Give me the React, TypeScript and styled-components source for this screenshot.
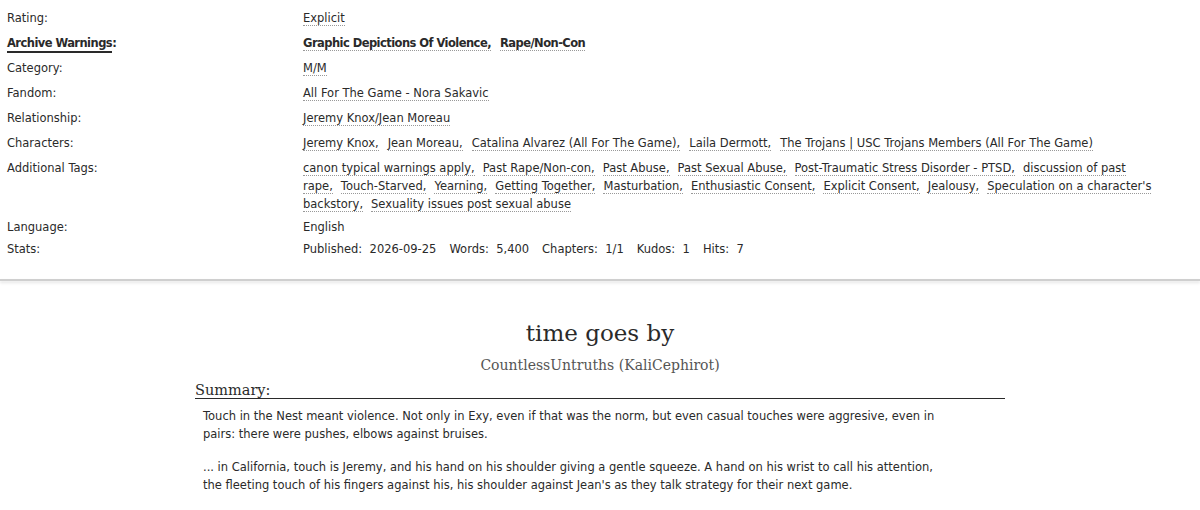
import React from "react";
import styled, { createGlobalStyle } from "styled-components";

const GlobalStyle = createGlobalStyle`
  html, body {
    margin: 0;
    padding: 0;
    background: #fff;
  }
  body {
    font-family: "DejaVu Sans", Verdana, sans-serif;
    color: #2a2a2a;
  }
`;

// Work meta block
const MetaList = styled.dl`
  display: grid;
  grid-template-columns: 296px 1fr;
  row-gap: 4px;
  margin: 0;
  padding: 8.5px 45px 0 7px;
  font-size: 11.5px;
  line-height: 18px;
`;

const Label = styled.dt`
  margin: 0;
`;

const ActiveLabel = styled.span`
  font-weight: 700;
  letter-spacing: -0.55px;
  border-bottom: 2px solid #2a2a2a;
  padding-bottom: 1px;
`;

const Value = styled.dd<{ $pad?: number }>`
  margin: 0;
  padding-bottom: ${(p) => p.$pad ?? 0}px;
`;

const TagList = styled.ul`
  list-style: none;
  margin: 0;
  padding: 0;
  display: flex;
  flex-wrap: wrap;
`;

const Tag = styled.li`
  margin-right: 9px;
  white-space: nowrap;
`;

const TagLink = styled.a<{ $bold?: boolean }>`
  color: #2a2a2a;
  text-decoration: none;
  font-weight: ${(p) => (p.$bold ? 700 : 400)};
  letter-spacing: ${(p) => (p.$bold ? "-0.55px" : "normal")};
  border-bottom: 1px dotted #999;
`;

// Freeform tags wrap word by word, so they stay inline
const FreeformList = styled.div``;

const FreeformLink = styled(TagLink)`
  margin-right: 8px;
`;

const Stats = styled.div`
  display: flex;
  gap: 13px;
`;

const Stat = styled.span`
  white-space: pre;
`;

const Divider = styled.hr`
  margin: 21px 0 0;
  border: 0;
  height: 2px;
  background: #cfcfcf;
  box-shadow: 0 2px 3px rgba(0, 0, 0, 0.12);
`;

// Preface
const Preface = styled.div`
  display: flex;
  flex-direction: column;
  align-items: center;
  padding-top: 37px;
`;

const Title = styled.h2`
  margin: 0;
  font-family: "DejaVu Serif", Georgia, serif;
  font-weight: 400;
  font-size: 23px;
  line-height: 30px;
  color: #2a2a2a;
`;

const Byline = styled.h3`
  margin: 7px 0 0;
  font-family: "DejaVu Serif", Georgia, serif;
  font-weight: 400;
  font-size: 14px;
  line-height: 20px;
  color: #555;
`;

const Summary = styled.div`
  align-self: stretch;
  margin: 7px 195px 0 195px;
`;

const SummaryHeading = styled.h3`
  margin: 0;
  font-family: "DejaVu Serif", Georgia, serif;
  font-weight: 400;
  font-size: 14.5px;
  line-height: 16px;
  border-bottom: 1px solid #2a2a2a;
  color: #2a2a2a;
`;

const SummaryBody = styled.blockquote`
  margin: 0;
  padding: 8px 62px 0 8px;
  font-size: 11.5px;
  line-height: 18px;

  p {
    margin: 0 0 15px;
  }
`;

type Row = { label: string; tags: string[]; bold?: boolean };

const rows: Row[] = [
  { label: "Rating:", tags: ["Explicit"] },
  {
    label: "Archive Warnings",
    tags: ["Graphic Depictions Of Violence", "Rape/Non-Con"],
    bold: true,
  },
  { label: "Category:", tags: ["M/M"] },
  { label: "Fandom:", tags: ["All For The Game - Nora Sakavic"] },
  { label: "Relationship:", tags: ["Jeremy Knox/Jean Moreau"] },
  {
    label: "Characters:",
    tags: [
      "Jeremy Knox",
      "Jean Moreau",
      "Catalina Alvarez (All For The Game)",
      "Laila Dermott",
      "The Trojans | USC Trojans Members (All For The Game)",
    ],
  },
];

const extraTags = [
  "canon typical warnings apply",
  "Past Rape/Non-con",
  "Past Abuse",
  "Past Sexual Abuse",
  "Post-Traumatic Stress Disorder - PTSD",
  "discussion of past rape",
  "Touch-Starved",
  "Yearning",
  "Getting Together",
  "Masturbation",
  "Enthusiastic Consent",
  "Explicit Consent",
  "Jealousy",
  "Speculation on a character's backstory",
  "Sexuality issues post sexual abuse",
];

const stats: [string, string][] = [
  ["Published:", "2026-09-25"],
  ["Words:", "5,400"],
  ["Chapters:", "1/1"],
  ["Kudos:", "1"],
  ["Hits:", "7"],
];

const renderTags = (tags: string[], bold?: boolean) => (
  <TagList>
    {tags.map((t, i) => (
      <Tag key={t}>
        <TagLink href="#" $bold={bold}>
          {t}
          {i < tags.length - 1 ? "," : ""}
        </TagLink>
      </Tag>
    ))}
  </TagList>
);

const App = (): JSX.Element => {
  return (
    <>
      <GlobalStyle />
      <MetaList>
        {rows.map((r) => (
          <React.Fragment key={r.label}>
            {r.bold ? (
              <Label>
                <ActiveLabel>{r.label}</ActiveLabel>
                <b>:</b>
              </Label>
            ) : (
              <Label>{r.label}</Label>
            )}
            <Value $pad={3}>{renderTags(r.tags, r.bold)}</Value>
          </React.Fragment>
        ))}
        <Label>Additional Tags:</Label>
        <Value $pad={1}>
          <FreeformList>
            {extraTags.map((t, i) => (
              <FreeformLink href="#" key={t}>
                {t}
                {i < extraTags.length - 1 ? "," : ""}
              </FreeformLink>
            ))}
          </FreeformList>
        </Value>
        <Label>Language:</Label>
        <Value>English</Value>
        <Label>Stats:</Label>
        <Value>
          <Stats>
            {stats.map(([k, v]) => (
              <Stat key={k}>
                {k}  {v}
              </Stat>
            ))}
          </Stats>
        </Value>
      </MetaList>
      <Divider />
      <Preface>
        <Title>time goes by</Title>
        <Byline>CountlessUntruths (KaliCephirot)</Byline>
        <Summary>
          <SummaryHeading>Summary:</SummaryHeading>
          <SummaryBody>
            <p>
              Touch in the Nest meant violence. Not only in Exy, even if that was
              the norm, but even casual touches were aggresive, even in pairs:
              there were pushes, elbows against bruises.
            </p>
            <p>
              ... in California, touch is Jeremy, and his hand on his shoulder
              giving a gentle squeeze. A hand on his wrist to call his attention,
              the fleeting touch of his fingers against his, his shoulder against
              Jean's as they talk strategy for their next game.
            </p>
          </SummaryBody>
        </Summary>
      </Preface>
    </>
  );
};

export default App;
